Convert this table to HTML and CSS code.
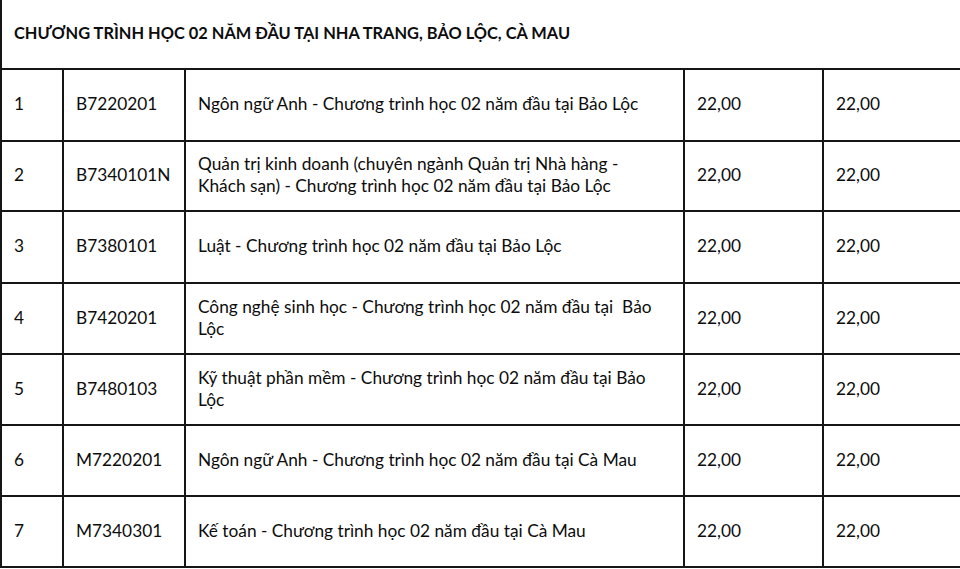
FILE: index.html
```html
<!DOCTYPE html>
<html lang="vi">
<head>
<meta charset="utf-8">
<title>Chương trình học 02 năm đầu</title>
<link rel="stylesheet" href="styles.css">
</head>
<body>
<div class="sheet">
  <div class="cell head">CHƯƠNG TRÌNH HỌC 02 NĂM ĐẦU TẠI NHA TRANG, BẢO LỘC, CÀ MAU</div>

  <div class="cell">1</div>
  <div class="cell">B7220201</div>
  <div class="cell">Ngôn ngữ Anh - Chương trình học 02 năm đầu tại Bảo Lộc</div>
  <div class="cell">22,00</div>
  <div class="cell last">22,00</div>

  <div class="cell">2</div>
  <div class="cell">B7340101N</div>
  <div class="cell">Quản trị kinh doanh (chuyên ngành Quản trị Nhà hàng -<br>Khách sạn) - Chương trình học 02 năm đầu tại Bảo Lộc</div>
  <div class="cell">22,00</div>
  <div class="cell last">22,00</div>

  <div class="cell">3</div>
  <div class="cell">B7380101</div>
  <div class="cell">Luật - Chương trình học 02 năm đầu tại Bảo Lộc</div>
  <div class="cell">22,00</div>
  <div class="cell last">22,00</div>

  <div class="cell">4</div>
  <div class="cell">B7420201</div>
  <div class="cell">Công nghệ sinh học - Chương trình học 02 năm đầu tại&nbsp; Bảo<br>Lộc</div>
  <div class="cell">22,00</div>
  <div class="cell last">22,00</div>

  <div class="cell">5</div>
  <div class="cell">B7480103</div>
  <div class="cell">Kỹ thuật phần mềm - Chương trình học 02 năm đầu tại Bảo<br>Lộc</div>
  <div class="cell">22,00</div>
  <div class="cell last">22,00</div>

  <div class="cell">6</div>
  <div class="cell">M7220201</div>
  <div class="cell">Ngôn ngữ Anh - Chương trình học 02 năm đầu tại Cà Mau</div>
  <div class="cell">22,00</div>
  <div class="cell last">22,00</div>

  <div class="cell">7</div>
  <div class="cell">M7340301</div>
  <div class="cell">Kế toán - Chương trình học 02 năm đầu tại Cà Mau</div>
  <div class="cell">22,00</div>
  <div class="cell last">22,00</div>
</div>
</body>
</html>
```

FILE: styles.css
```css
html, body {
  margin: 0;
  padding: 0;
  background: #ffffff;
  overflow: hidden;
}

body {
  width: 960px;
  height: 569px;
}

.sheet {
  display: grid;
  grid-template-columns: 62px 122px 499px 139px 136px;
  grid-template-rows: 70px 72px 70px 72px 71px 71px 71px 71px;
  border-left: 2px solid #161616;
  width: 958px;
  font-family: Lato, "Noto Sans", sans-serif;
  font-size: 17.3px;
  color: #0d0d0d;
}

.cell {
  box-sizing: border-box;
  display: flex;
  align-items: center;
  padding: 0 8px 2px 12px;
  border-right: 2px solid #161616;
  border-bottom: 2px solid #161616;
  line-height: 22px;
  white-space: nowrap;
  overflow: hidden;
}

.head {
  grid-column: 1 / -1;
  font-weight: 700;
  font-size: 16.4px;
  border-right: none;
}

.last {
  border-right: none;
}
```
